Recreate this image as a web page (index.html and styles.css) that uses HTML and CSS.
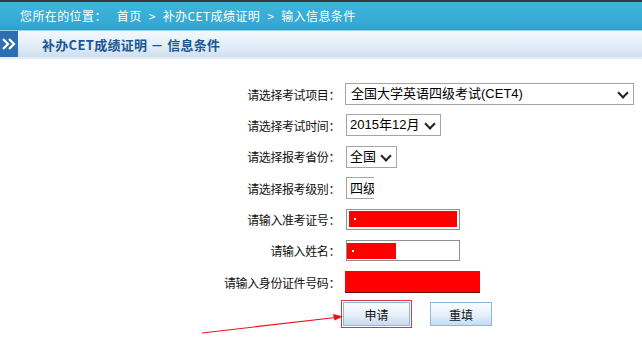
FILE: index.html
```html
<!DOCTYPE html>
<html lang="zh-CN">
<head>
  <meta charset="UTF-8" />
  <title>补办CET成绩证明 - 信息条件</title>
  <link rel="stylesheet" href="styles.css">
</head>
<body>

  <!-- breadcrumb -->
  <div class="crumb">
    <span class="crumb-label">您所在的位置：</span>
    <span>首页</span><span class="sep">&gt;</span><span>补办CET成绩证明</span><span class="sep">&gt;</span><span>输入信息条件</span>
  </div>

  <!-- title bar -->
  <div class="titlebar">
    <div class="chev">
      <svg width="14" height="12" viewBox="0 0 14 12">
        <path d="M1 1 L6 6 L1 11 M7 1 L12 6 L7 11" fill="none" stroke="#fff" stroke-width="2.2"/>
      </svg>
    </div>
    <h2>补办CET成绩证明 － 信息条件</h2>
  </div>

  <div class="form">
    <label>请选择考试项目：</label>
    <div class="select wide">全国大学英语四级考试(CET4)<span class="arrow"></span></div>

    <label>请选择考试时间：</label>
    <div class="select date">2015年12月<span class="arrow"></span></div>

    <label>请选择报考省份：</label>
    <div class="select prov">全国<span class="arrow"></span></div>

    <label>请选择报考级别：</label>
    <div class="clip"><span>四级</span></div>

    <label>请输入准考证号：</label>
    <div class="input zkz"><span class="mask full"><i></i></span></div>

    <label>请输入姓名：</label>
    <div class="input name"><span class="mask part"><i></i></span></div>

    <label>请输入身份证件号码：</label>
    <div class="redbox"></div>

    <div class="btns">
      <div class="mark"><button class="btn">申请</button></div>
      <button class="btn reset">重填</button>
    </div>
  </div>

  <svg class="pointer" width="160" height="30" viewBox="0 0 160 30">
    <path d="M2 28 L140 12" stroke="#e8141c" stroke-width="1.2" fill="none"/>
    <path d="M143 11.5 L133 9 L134.5 15.5 Z" fill="#e8141c"/>
  </svg>

</body>
</html>
```

FILE: styles.css
```css
body {
  margin: 0;
  background: #fff;
  font-family: "Noto Sans CJK SC", "DejaVu Sans", sans-serif;
  font-size: 12px;
  color: #000;
  position: relative;
  width: 642px;
  height: 363px;
  overflow: hidden;
}

.crumb {
  height: 27px;
  border-top: 2px solid #3a3a3a;
  background: linear-gradient(#3fb4dc, #34a9d3 80%, #2f9fc8);
  color: #fff;
  padding-left: 20px;
  display: flex;
  align-items: center;
  line-height: 1;
  padding-bottom: 1px;
  letter-spacing: 0.4px;
}

.crumb-label {
  margin-right: 10px;
}

.crumb .sep {
  margin: 0 7px;
}

.titlebar {
  display: flex;
  align-items: center;
  height: 26px;
  border-top: 1px solid #9fd0ea;
  border-bottom: 2px solid #e4ecf4;
  background: linear-gradient(#f4f8fd, #e2ecf7 60%, #cfdfee);
}

.chev {
  width: 18px;
  height: 26px;
  background: #2e6fb0;
  display: flex;
  align-items: center;
  justify-content: center;
}

.titlebar h2 {
  margin: 0 0 0 24px;
  font-size: 13px;
  font-weight: bold;
  color: #1b5896;
  letter-spacing: 0.3px;
}

.form {
  display: grid;
  grid-template-columns: 341px auto;
  grid-auto-rows: 22px;
  row-gap: 9.35px;
  margin-top: 24px;
  align-items: center;
}

.form label {
  text-align: right;
  padding-right: 1px;
  color: #111;
  letter-spacing: -0.4px;
}

.select {
  position: relative;
  height: 20px;
  border: 1px solid #a5a5a5;
  font-family: "Liberation Sans", Arial, "Noto Sans CJK SC", sans-serif;
  font-size: 13px;
  line-height: 20px;
  padding-left: 5px;
  box-sizing: content-box;
  margin-left: 4px;
}

.select .arrow {
  position: absolute;
  right: 6px;
  top: 5px;
  width: 6px;
  height: 6px;
  border-right: 2px solid #222;
  border-bottom: 2px solid #222;
  transform: rotate(45deg);
}

.wide { width: 282px; justify-self: start; }
.date { width: 90px; justify-self: start; margin-left: 5px; padding-left: 3px; }
.prov { width: 46px; justify-self: start; margin-left: 5px; padding-left: 3px; }

.clip {
  justify-self: start;
  margin-left: 5px;
  width: 24px;
  height: 20px;
  border: 1px solid #a5a5a5;
  border-right: none;
  padding-left: 3px;
  overflow: hidden;
  white-space: nowrap;
  font-size: 13px;
  line-height: 20px;
}

.input {
  justify-self: start;
  margin-left: 5px;
  height: 19px;
  border: 1px solid #8f8f8f;
  display: flex;
  align-items: center;
  padding: 0 1px;
}

.zkz { width: 110px; }
.name { width: 111px; padding-left: 0; }

.mask {
  background: #ff0000;
  height: 16px;
  position: relative;
}

.mask i {
  position: absolute;
  left: 5px;
  top: 7px;
  width: 2px;
  height: 2px;
  background: #fff;
}

.full { width: 108px; margin-left: 1px; }
.part { width: 49px; }

.redbox {
  justify-self: start;
  margin-left: 4px;
  width: 135px;
  height: 21px;
  background: #ff0000;
  border-bottom: 1px solid #6a1010;
}

.btns {
  grid-column: 2;
  align-self: start;
  display: flex;
  align-items: center;
  gap: 18px;
  margin-top: -2px;
}

.mark {
  border: 1px solid #e8303a;
  padding: 1px;
}

.btn {
  width: 67px;
  height: 24px;
  border: 1px solid #8fb8dd;
  background: linear-gradient(#fbfdff, #e4eff9 55%, #c6dbef);
  font-family: "Noto Sans CJK SC", sans-serif;
  font-size: 12px;
  color: #111;
  padding: 0;
}

.reset {
  width: 62px;
}

.pointer {
  position: absolute;
  left: 200px;
  top: 305px;
}
```
